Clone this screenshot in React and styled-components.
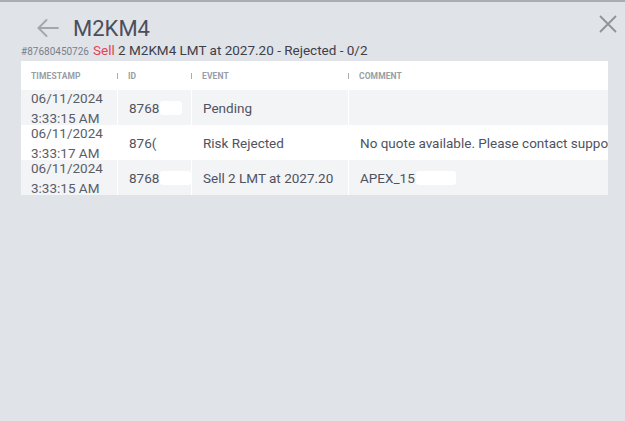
import React from "react";
import styled, { createGlobalStyle } from "styled-components";

const GlobalStyle = createGlobalStyle`
  html, body {
    margin: 0;
    padding: 0;
    background: #e0e3e8;
    font-family: Roboto, "Liberation Sans", Arial, sans-serif;
  }
`;

const Page = styled.div`
  position: relative;
  height: 421px;
  box-sizing: border-box;
  border-top: 2px solid #a9acb1;
  padding: 12px 17px 0 21px;
  overflow: hidden;
`;

const TitleRow = styled.div`
  display: flex;
  align-items: center;
  gap: 14px;
  padding-left: 16px;
  height: 28px;
`;

const BackButton = styled.button`
  background: none;
  border: 0;
  padding: 0;
  display: flex;
  cursor: pointer;
  color: #a2a6ad;
`;

const Title = styled.h1`
  margin: 0;
  font-size: 22px;
  font-weight: 400;
  color: #4b4f5c;
`;

const CloseButton = styled.button`
  position: absolute;
  top: 13px;
  right: 8px;
  background: none;
  border: 0;
  padding: 0;
  display: flex;
  cursor: pointer;
  color: #8f9298;
`;

const Summary = styled.div`
  height: 19px;
  display: flex;
  align-items: baseline;
  gap: 4px;
  font-size: 13.5px;
  color: #3d404a;
  white-space: nowrap;
`;

const OrderId = styled.span`
  font-size: 10px;
  color: #7b7f88;
`;

const Side = styled.span`
  color: #e8414d;
`;

const Table = styled.div`
  width: 587px;
  display: grid;
  grid-template-columns: 96px 74px 157px 260px;
`;

const HeadCell = styled.div`
  position: relative;
  height: 29px;
  display: flex;
  align-items: center;
  padding-left: ${(p) => (p.$first ? "10px" : "11px")};
  background: #ffffff;
  font-size: 8.5px;
  font-weight: 700;
  color: #999da5;
  letter-spacing: 0.1px;

  &::before {
    content: "";
    display: ${(p) => (p.$first ? "none" : "block")};
    position: absolute;
    left: 0;
    top: 12px;
    width: 1px;
    height: 6px;
    background: #a8abb2;
  }
`;

const Cell = styled.div`
  height: 35px;
  box-sizing: border-box;
  display: flex;
  align-items: center;
  padding-left: ${(p) => (p.$first ? "10px" : "11px")};
  border-left: ${(p) => (p.$first ? "0" : "1px solid #ffffff")};
  background: ${(p) => (p.$odd ? "#f3f4f6" : "#ffffff")};
  overflow: hidden;
  white-space: nowrap;
  font-size: 13.5px;
  color: #4f5360;
`;

const Stamp = styled.div`
  line-height: 20px;
  white-space: normal;
  color: #5a5e69;
`;

const Redacted = styled.span`
  display: inline-block;
  width: ${(p) => p.$w}px;
  height: 14px;
  margin-left: 1px;
  background: #ffffff;
  border-radius: 3px;
  vertical-align: middle;
`;

const rows = [
  { date: "06/11/2024", time: "3:33:15 AM", id: "8768", idMask: 22, event: "Pending", comment: "" },
  { date: "06/11/2024", time: "3:33:17 AM", id: "876(", idMask: 0, event: "Risk Rejected", comment: "No quote available. Please contact support" },
  { date: "06/11/2024", time: "3:33:15 AM", id: "8768", idMask: 32, event: "Sell 2 LMT at 2027.20", comment: "APEX_15", commentMask: 40 },
];

const ArrowLeft = () => (
  <svg width="22" height="18" viewBox="0 0 22 18" fill="none" stroke="currentColor" strokeWidth="1.8" strokeLinecap="round" strokeLinejoin="round">
    <path d="M21 9H1.5" />
    <path d="M9.5 1L1.5 9l8 8" />
  </svg>
);

const CloseIcon = () => (
  <svg width="18" height="18" viewBox="0 0 18 18" fill="none" stroke="currentColor" strokeWidth="1.8" strokeLinecap="round">
    <path d="M1.5 1.5l15 15M16.5 1.5l-15 15" />
  </svg>
);

export default function App() {
  return (
    <>
      <GlobalStyle />
      <Page>
        <TitleRow>
          <BackButton aria-label="back">
            <ArrowLeft />
          </BackButton>
          <Title>M2KM4</Title>
        </TitleRow>
        <CloseButton aria-label="close">
          <CloseIcon />
        </CloseButton>
        <Summary>
          <OrderId>#87680450726</OrderId>
          <span>
            <Side>Sell</Side> 2 M2KM4 LMT at 2027.20 - Rejected - 0/2
          </span>
        </Summary>
        <Table>
          <HeadCell $first>TIMESTAMP</HeadCell>
          <HeadCell>ID</HeadCell>
          <HeadCell>EVENT</HeadCell>
          <HeadCell>COMMENT</HeadCell>
          {rows.map((r, i) => {
            const odd = i % 2 === 0;
            return (
              <React.Fragment key={i}>
                <Cell $first $odd={odd}>
                  <Stamp>
                    {r.date}
                    <br />
                    {r.time}
                  </Stamp>
                </Cell>
                <Cell $odd={odd}>
                  {r.id}
                  {r.idMask > 0 && <Redacted $w={r.idMask} />}
                </Cell>
                <Cell $odd={odd}>{r.event}</Cell>
                <Cell $odd={odd}>
                  {r.comment}
                  {r.commentMask && <Redacted $w={r.commentMask} />}
                </Cell>
              </React.Fragment>
            );
          })}
        </Table>
      </Page>
    </>
  );
}
